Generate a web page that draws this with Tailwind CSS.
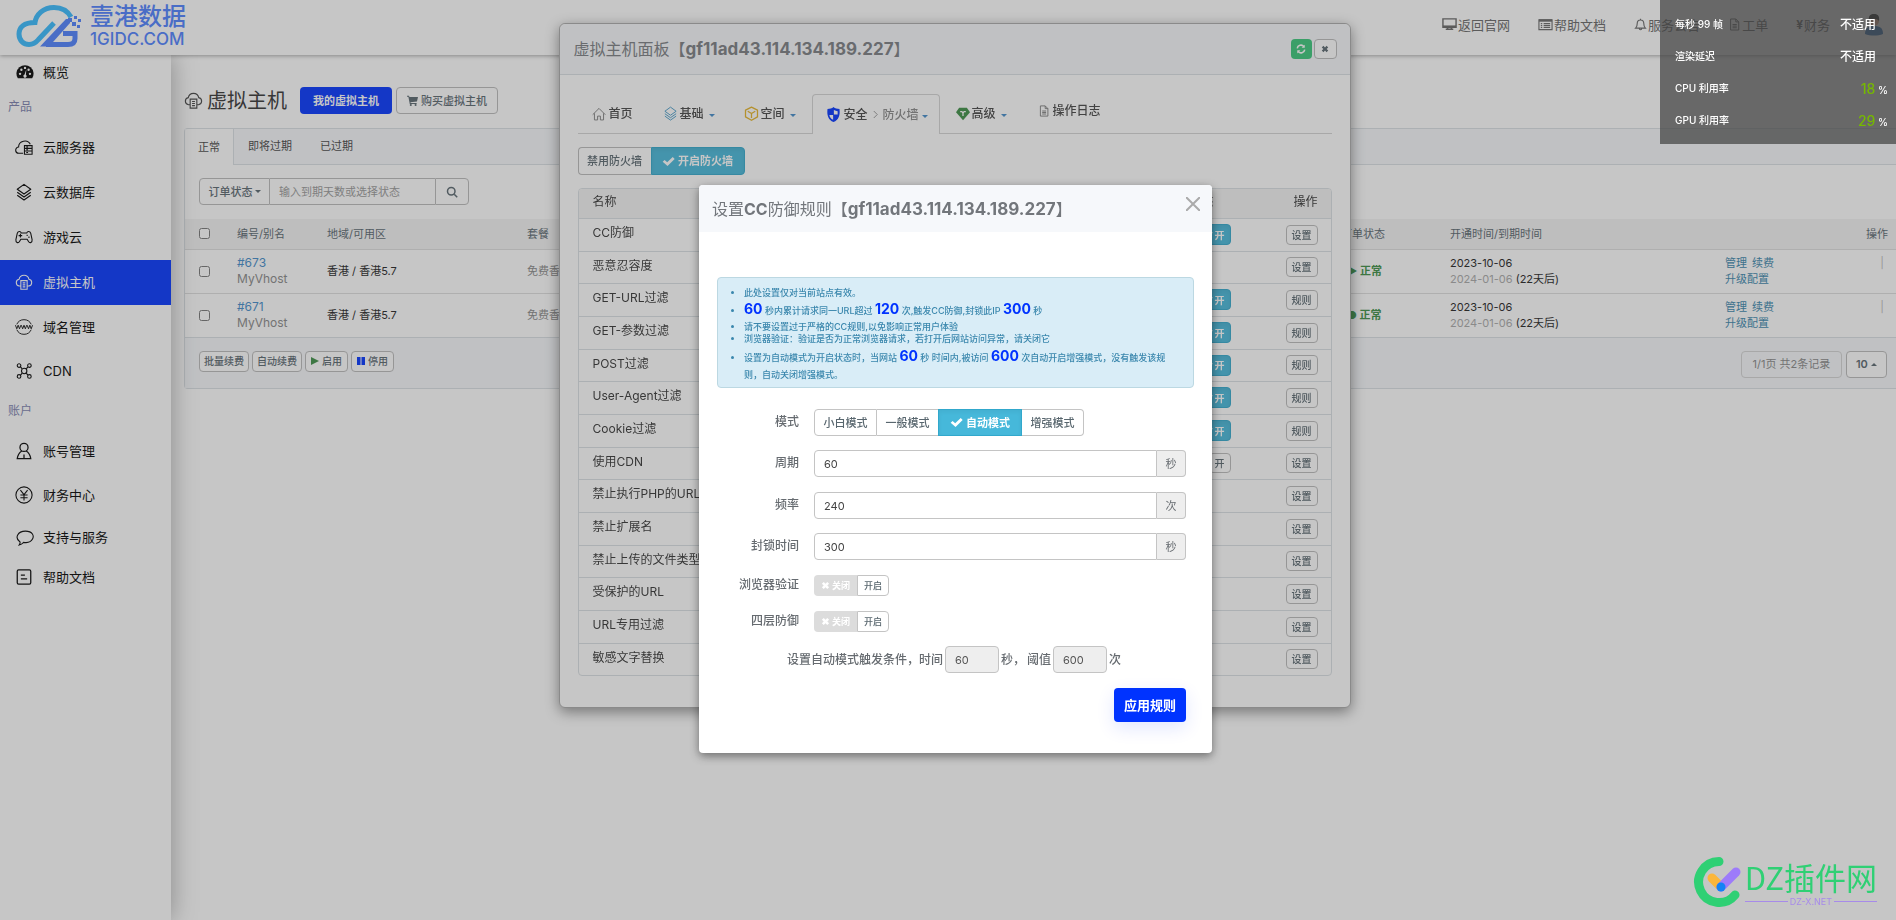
<!DOCTYPE html>
<html lang="zh-CN">
<head>
<meta charset="utf-8">
<title>壹港数据 - 虚拟主机</title>
<script src="https://cdn.jsdelivr.net/npm/@tailwindcss/browser@4"></script>
</head>
<body class="flex h-screen flex-col overflow-hidden bg-white font-['Inter','Noto_Sans_CJK_SC',sans-serif] text-[11px] leading-4 text-[#58666e]">

<svg class="hidden" aria-hidden="true">
  <symbol id="i-vhost" viewBox="0 0 20 20"><path d="M6 14.500H4.800A3.800 3.800 0 0 1 4.500 7 5.600 5.600 0 0 1 15.500 7a3.800 3.800 0 0 1-.3 7.500H14M6.500 8.500h7v9.500h-7zM8.500 11h3M8.500 13.200h3M8.500 15.400h3" fill="none" stroke="currentColor" stroke-width="1.200"/></symbol>
  <symbol id="i-layers" viewBox="0 0 20 20"><path d="M10 1.500 17.500 7 10 12.300 2.500 7zM2.500 10.300 10 15.600l7.500-5.300M2.500 13.500 10 18.800l7.500-5.300" fill="none" stroke="currentColor" stroke-width="1.300" stroke-linejoin="round"/></symbol>
  <symbol id="i-doc" viewBox="0 0 20 20"><path d="M4 1.500h8l4.500 4.500v12.500H4zM12 1.500V6h4.500M7 10h6.500M7 12.500h6.500M7 15h6.500" fill="none" stroke="currentColor" stroke-width="1.500"/></symbol>
  <symbol id="i-check" viewBox="0 0 20 20"><path d="M1 10.500 4 7.500l4 3.500L16.500 3l3 3L8.500 17z" fill="currentColor"/></symbol>
  <symbol id="i-x" viewBox="0 0 20 20"><path d="M2 6 6 2l4 4 4-4 4 4-4 4 4 4-4 4-4-4-4 4-4-4 4-4z" fill="currentColor"/></symbol>
</svg>

<!-- top bar -->
<header class="relative z-20 flex h-[55px] shrink-0 items-center justify-between bg-white pr-[13px] pl-4 shadow-[0_1px_4px_rgba(0,0,0,0.35)]">
  <a href="#" class="flex items-center gap-2 pb-1" aria-label="壹港数据">
    <svg class="h-[44px] w-[66px]" viewBox="0 0 66 44" fill="none">
      <path d="M55 13C51 6 45 3.500 38 3.500 27 3.500 20 11 19 18.500 8 18.500 3 23 3 30c0 7 5 10.500 10 10.500 5 0 7-2 9.500-5L38 19" stroke="#36baff" stroke-width="5"/>
      <path d="M50 15 24 42.500h9L54 19V15z" fill="#4d80ff"/>
      <path d="M30 40.500h22c5 0 7-2.500 7-6V29.500H47" stroke="#4d80ff" stroke-width="5"/>
      <path d="M52 14h4v4h-4zM56 18h4v4h-4zM58 12h3v3h-3zM62 15h3v3h-3zM61 21h3v3h-3z" fill="#4d80ff"/>
    </svg>
    <span class="flex flex-col text-[#4d80ff]">
      <span class="text-[24px] leading-[26px] font-medium">壹港数据</span>
      <span class="text-[17px] leading-[18px] font-medium">1GIDC.COM</span>
    </span>
  </a>
  <nav class="flex items-center gap-[28px] pb-[6px] text-[13px] text-[#666]">
    <a href="#" class="flex items-center gap-px"><svg class="size-[15px]" viewBox="0 0 16 16"><path d="M1 2h14v9H1zM6 11h4v2H6zM4 13h8" fill="none" stroke="currentColor" stroke-width="1.500"/><path d="M1 9h14v2H1z" fill="currentColor"/></svg>返回官网</a>
    <a href="#" class="flex items-center gap-px"><svg class="size-[15px]" viewBox="0 0 16 16"><path d="M1 3h14v10.500H1zM3 7h1.500M3 9h1.500M3 11h1.500M6 7h7M6 9h7M6 11h7" fill="none" stroke="currentColor" stroke-width="1.200"/><path d="M1 2.500h14V5H1z" fill="currentColor"/></svg>帮助文档</a>
    <a href="#" class="flex items-center gap-px"><svg class="size-[13px]" viewBox="0 0 16 16"><path d="M2 12.500c2-2 2-3.500 2-6a4 4 0 0 1 8 0c0 2.500 0 4 2 6zM6.500 13a1.500 1.500 0 0 0 3 0M8 1v1.500" fill="none" stroke="currentColor" stroke-width="1.400"/></svg>服务公告</a>
    <a href="#" class="flex items-center gap-px"><svg class="size-[13px]"><use href="#i-doc"/></svg>工单</a>
    <a href="#" class="flex items-center gap-px"><b class="text-[12px]">¥</b>财务</a>
    <a href="#" aria-label="账户" class="ml-[7px]"><svg class="h-[22px] w-[18px]" viewBox="0 0 18 22"><circle cx="9" cy="7" r="5" fill="#e0a080"/><path d="M4 7C3 1 6 0 9 0s6 1 5 7c-2-3-8-3-10 0z" fill="#222"/><path d="M0 20c0-6 3-8 9-8s9 2 9 8c-5 2-13 2-18 0z" fill="#2f6fb5"/></svg></a>
  </nav>
</header>

<div class="flex min-h-0 grow">
  <!-- side menu -->
  <aside class="relative z-10 w-[171px] shrink-0 bg-white text-[13px] text-black shadow-[0_0_24px_rgba(0,0,0,0.35)]">
    <a href="#" class="flex h-[34px] items-center gap-[9px] pl-4"><svg class="size-[18px]" viewBox="0 0 20 20"><path d="M2 17a9.500 9.500 0 1 1 16 0z" fill="currentColor"/><g fill="#fff"><circle cx="4.500" cy="12" r="1.300"/><circle cx="6" cy="7.500" r="1.300"/><circle cx="10" cy="5.500" r="1.300"/><circle cx="14" cy="7.500" r="1.300"/><circle cx="15.500" cy="12" r="1.300"/><path d="m11.500 7-.5 6a1.800 1.800 0 1 1-1.500-.2z"/></g></svg>概览</a>
    <h2 class="flex h-9 items-center pl-2 text-[12px] text-[#7b7fae]">产品</h2>
    <a href="#" class="flex h-[45px] items-center gap-[10px] pb-px pl-[15px]"><svg class="size-[18px]" viewBox="0 0 20 20" fill="none" stroke="currentColor" stroke-width="1.200"><path d="M9 17H4.500A3.500 3.500 0 0 1 4 10c0-7 10-9 13-3M10.500 8.500H19V18h-8.500zM10.500 11.500H19M10.500 14.500H19M12.500 10h2M12.500 13h2M12.500 16.200h2"/></svg>云服务器</a>
    <a href="#" class="flex h-[45px] items-center gap-[10px] pb-px pl-[15px]"><svg class="size-[18px]"><use href="#i-layers"/></svg>云数据库</a>
    <a href="#" class="flex h-[45px] items-center gap-[10px] pb-px pl-[15px]"><svg class="size-[18px]" viewBox="0 0 20 20" fill="none" stroke="currentColor" stroke-width="1.200"><path d="M7 5.500C6 3 3 3.500 2.500 6L1 13c-.3 3 2.500 4.500 4 2l1.500-2.500h7L15 15c1.500 2.500 4.300 1 4-2l-1.500-7C17 3.500 14 3 13 5.500zM4 8.500h4M6 6.500v4M13.500 7.500v1.500M15.500 9.500V11"/></svg>游戏云</a>
    <a href="#" class="flex h-[45px] items-center gap-[10px] bg-[#0033ff] pb-[2px] pl-[15px] text-white"><svg class="size-[18px]"><use href="#i-vhost"/></svg>虚拟主机</a>
    <a href="#" class="flex h-11 items-center gap-[10px] pl-[15px]"><svg class="size-[18px]" viewBox="0 0 20 20" fill="none" stroke="currentColor" stroke-width="1"><path d="M2 7a8.800 8.800 0 0 1 16 0M2 13a8.800 8.800 0 0 0 16 0M.5 8l1.500 4 1.500-4L5 12l1.500-4M7 8l1.500 4L10 8l1.500 4L13 8M13.500 8l1.500 4 1.500-4 1.500 4 1.500-4"/></svg>域名管理</a>
    <a href="#" class="flex h-11 items-center gap-[10px] pl-[15px]"><svg class="size-[18px]" viewBox="0 0 20 20" fill="none" stroke="currentColor" stroke-width="1.200"><circle cx="4.500" cy="4" r="2"/><circle cx="16" cy="4" r="2"/><circle cx="4.500" cy="16" r="2"/><circle cx="16" cy="16" r="2"/><circle cx="10.200" cy="10" r="3"/><path d="m6 5.500 2 2M14.500 5.500l-2 2M6 14.500l2-2M14.500 14.500l-2-2"/></svg>CDN</a>
    <h2 class="flex h-9 items-center pl-2 text-[12px] text-[#7b7fae]">账户</h2>
    <a href="#" class="flex h-11 items-center gap-[10px] pl-[15px]"><svg class="size-[18px]" viewBox="0 0 20 20" fill="none" stroke="currentColor" stroke-width="1.400"><circle cx="10" cy="6" r="4.500"/><path d="M7.500 10C4.500 12 3 14.500 2.500 18.500h15C17 14.500 15.500 12 12.500 10M10 14v4"/></svg>账号管理</a>
    <a href="#" class="flex h-11 items-center gap-[10px] pl-[15px]"><svg class="size-[18px]" viewBox="0 0 20 20" fill="none" stroke="currentColor" stroke-width="1.200"><circle cx="10" cy="10" r="9"/><path d="m6 4.500 4 5 4-5M10 9.500V16M6 10h8M6 13h8"/></svg>财务中心</a>
    <a href="#" class="flex h-10 items-center gap-[9px] pl-4"><svg class="size-[18px]" viewBox="0 0 20 20" fill="none" stroke="currentColor" stroke-width="1.200"><path d="M3.500 19c1-1.500 1.300-2 1-3.500C-2 11 2 3.500 10.500 3.500S20 9 18.500 12c-2 4-7 4.500-10 4-1.500 1.500-3 2.500-5 3z"/></svg>支持与服务</a>
    <a href="#" class="flex h-10 items-center gap-[10px] pl-[15px]"><svg class="size-[18px]" viewBox="0 0 20 20" fill="none" stroke="currentColor" stroke-width="1.400"><rect x="2.500" y="2" width="15" height="16" rx="1.500"/><path d="M6.500 8H11M6.500 12h7"/></svg>帮助文档</a>
  </aside>

  <!-- virtual host list -->
  <main class="flex min-w-0 grow flex-col pt-8 pl-[13px]">
    <div class="flex h-[27px] items-center">
      <svg class="mr-1 size-[19px] text-[#444]"><use href="#i-vhost"/></svg>
      <h1 class="mr-[13px] text-[20px] leading-6 text-[#333]">虚拟主机</h1>
      <button class="mr-1 h-[27px] rounded-sm bg-[#0033ff] px-[13px] text-[11px] font-bold text-white">我的虚拟主机</button>
      <button class="flex h-[27px] items-center gap-[3px] rounded-sm border border-[#bbb] px-[10px] font-medium"><svg class="size-[11px]" viewBox="0 0 16 16" fill="currentColor"><path d="M0 1h3l.5 2H16l-1.500 6.500-9.500 1 .3 1.200H14V13H4L2 2.500H0z"/><circle cx="5.500" cy="14.500" r="1.500"/><circle cx="12.500" cy="14.500" r="1.500"/></svg>购买虚拟主机</button>
    </div>

    <section class="mt-[14px] rounded-l border-y border-l border-[#dae0e4]">
      <div class="flex h-9 border-b border-[#dae0e4] bg-[#f6f8fb] text-[#444]">
        <button class="-mb-px rounded-tl border-r border-[#dae0e4] bg-white px-[13px] pb-px">正常</button>
        <button class="px-[14px] pb-px">即将过期</button>
        <button class="px-[14px] pb-px">已过期</button>
      </div>
      <div class="flex px-[14px] pt-[13px] pb-[14px]">
        <button class="flex h-[27px] w-[71px] items-center justify-center gap-[2px] rounded-l-sm border border-[#bbb] font-medium">订单状态<span class="border-x-3 border-t-3 border-x-transparent border-t-current"></span></button>
        <input type="text" aria-label="筛选" placeholder="输入到期天数或选择状态" class="h-[27px] w-[165px] border-y border-[#bbb] px-[9px] placeholder:text-[#999]">
        <button aria-label="搜索" class="flex h-[27px] w-[34px] items-center justify-center rounded-r-sm border border-[#bbb]"><svg class="size-3" viewBox="0 0 16 16" fill="none" stroke="currentColor" stroke-width="2"><circle cx="7" cy="7" r="5"/><path d="m11 11 4 4"/></svg></button>
      </div>
      <table class="w-full table-fixed text-left">
        <colgroup><col class="w-[38px]"><col class="w-[90px]"><col class="w-[200px]"><col><col class="w-[108px]"><col class="w-[275px]"><col class="w-[186px]"></colgroup>
        <thead>
          <tr class="h-[30px] border-b border-[#dedede] bg-[#f4f4f4]">
            <th class="pl-[14px]"><input type="checkbox" aria-label="全选" class="block size-[11px]"></th>
            <th class="pl-[14px] font-normal">编号/别名</th><th class="pl-[14px] font-normal">地域/可用区</th><th class="pl-[14px] font-normal">套餐</th>
            <th class="pl-[14px] font-normal">订单状态</th><th class="pl-[15px] font-normal">开通时间/到期时间</th><th class="pr-2 text-right font-normal">操作</th>
          </tr>
        </thead>
        <tbody>
          <tr class="h-11 border-b border-[#dedede]">
            <td class="pl-[14px]"><input type="checkbox" aria-label="选择 673" class="block size-[11px]"></td>
            <td class="pl-[14px] text-[12px]"><a href="#" class="text-[#428bca]">#673</a><br><span class="text-[#888]">MyVhost</span></td>
            <td class="pl-[14px] text-[#222]">香港 / 香港5.7</td><td class="pl-[14px] text-[#888]">免费香港虚拟主机</td>
            <td class="pl-[20px] font-bold text-[#3c8f44]">▶ 正常</td>
            <td class="pl-[15px] text-[#222]">2023-10-06<br><span class="text-[#aaa]">2024-01-06</span> (22天后)</td>
            <td class="pr-3 pl-[15px] align-middle"><div class="flex justify-between text-[#bbb]"><div><a href="#" class="mr-[5px] text-[#3a87ad]">管理</a><a href="#" class="text-[#3a87ad]">续费</a><br><a href="#" class="text-[#3a87ad]">升级配置</a></div>|</div></td>
          </tr>
          <tr class="h-11 border-b border-[#dae0e4]">
            <td class="pl-[14px]"><input type="checkbox" aria-label="选择 671" class="block size-[11px]"></td>
            <td class="pl-[14px] text-[12px]"><a href="#" class="text-[#428bca]">#671</a><br><span class="text-[#888]">MyVhost</span></td>
            <td class="pl-[14px] text-[#222]">香港 / 香港5.7</td><td class="pl-[14px] text-[#888]">免费香港虚拟主机</td>
            <td class="pl-[20px] font-bold text-[#3c8f44]">● 正常</td>
            <td class="pl-[15px] text-[#222]">2023-10-06<br><span class="text-[#aaa]">2024-01-06</span> (22天后)</td>
            <td class="pr-3 pl-[15px] align-middle"><div class="flex justify-between text-[#bbb]"><div><a href="#" class="mr-[5px] text-[#3a87ad]">管理</a><a href="#" class="text-[#3a87ad]">续费</a><br><a href="#" class="text-[#3a87ad]">升级配置</a></div>|</div></td>
          </tr>
        </tbody>
      </table>
      <div class="flex h-[50px] items-start justify-between bg-[#f6f8fb] pt-[13px] pr-[9px] pl-[14px]">
        <div class="flex gap-[3px] text-[10px] font-medium">
          <button class="h-[21px] rounded-sm border border-[#bbb] bg-white px-1">批量续费</button>
          <button class="h-[21px] rounded-sm border border-[#bbb] bg-white px-1">自动续费</button>
          <button class="flex h-[21px] items-center gap-[3px] rounded-sm border border-[#bbb] bg-white px-[5px]"><svg class="size-2" viewBox="0 0 8 8"><path d="M0 0 8 4 0 8z" fill="#3c8f44"/></svg>启用</button>
          <button class="flex h-[21px] items-center gap-[3px] rounded-sm border border-[#bbb] bg-white px-[5px]"><svg class="size-2" viewBox="0 0 8 8"><path d="M0 0h3.500v8H0zM4.500 0H8v8H4.500z" fill="#0033ff"/></svg>停用</button>
        </div>
        <div class="flex gap-1">
          <span class="flex h-[27px] w-[101px] items-center justify-center rounded-sm border border-[#d4d4d4] text-[#888]">1/1页 共2条记录</span>
          <button class="flex h-[27px] w-[41px] items-center justify-center gap-[3px] rounded-sm border border-[#bbb] bg-white font-semibold">10<span class="border-x-3 border-b-3 border-x-transparent border-b-current"></span></button>
        </div>
      </div>
    </section>
  </main>
</div>

<!-- host panel window -->
<div class="fixed inset-0 z-30 flex items-start justify-center pt-[23px] pl-[13px]">
  <section class="w-[792px] rounded-md border border-[#aaa] bg-white shadow-[0_4px_14px_rgba(0,0,0,0.45)]">
    <header class="flex h-[51px] items-center justify-between rounded-t-md border-b border-[#dae0e4] bg-[#f6f8fb] pr-[13px] pl-[14px]">
      <h2 class="text-[16px] leading-5 text-[#7a7d82]">虚拟主机面板【<b class="text-[17px]">gf11ad43.114.134.189.227</b>】</h2>
      <div class="flex gap-[2px]">
        <button aria-label="刷新" class="flex h-5 w-[21px] items-center justify-center rounded-sm bg-[#39c779] text-white"><svg class="size-[10px]" viewBox="0 0 16 16" fill="none" stroke="currentColor" stroke-width="2.500"><path d="M2 7a6 6 0 0 1 10.500-3M14 9a6 6 0 0 1-10.500 3"/><path d="M14 1v5H9zM2 15v-5h5z" fill="currentColor" stroke="none"/></svg></button>
        <button aria-label="关闭" class="flex h-5 w-[23px] items-center justify-center rounded-sm border border-[#bbb] bg-white text-[#58666e]"><svg class="size-2"><use href="#i-x"/></svg></button>
      </div>
    </header>
    <div class="px-[18px] pt-[19px] pb-[31px]">
      <nav class="flex h-10 border-b border-[#d4d4d4] text-[12px] font-medium text-[#444]">
        <a href="#" class="flex w-[72px] items-center gap-[3px] pl-[14px]"><svg class="size-[14px] text-[#777]" viewBox="0 0 20 20" fill="none" stroke="currentColor" stroke-width="1.300"><path d="M1 11 10 2l9 9M3.500 9v9.500H8V13h4v5.500h4.500V9"/></svg>首页</a>
        <a href="#" class="flex w-[81px] items-center gap-[2px] pl-[13px]"><svg class="size-[15px] text-[#4a9cc8]"><use href="#i-layers"/></svg>基础<span class="mt-1 ml-[3px] border-x-3 border-t-3 border-x-transparent border-t-[#428bca]"></span></a>
        <a href="#" class="flex w-[81px] items-center gap-[2px] pl-[13px]"><svg class="size-[15px] text-[#e5b325]" viewBox="0 0 20 20" fill="none" stroke="currentColor" stroke-width="1.700" stroke-linejoin="round"><path d="m10 1.500 8 4v9l-8 4.500-8-4.500v-9zM5 7l5 3 5-3M10 10v6"/></svg>空间<span class="mt-1 ml-[3px] border-x-3 border-t-3 border-x-transparent border-t-[#428bca]"></span></a>
        <a href="#" class="-mb-px flex w-[128px] items-center gap-[3px] rounded-t-sm border border-b-0 border-[#d4d4d4] bg-white pl-[13px]"><svg class="size-[15px]" viewBox="0 0 20 20"><path d="M10 0c2 2 5 2.500 8 2.500C19 11 17 17 10 20 3 17 1 11 2 2.500 5 2.500 8 2 10 0z" fill="#0033ff"/><path d="M10.500 4c1.500 1 3.500 1.500 5 1.500V10h-5zM4.500 10.500h5V17c-3-1.500-4.700-4-5-6.500z" fill="#fff"/></svg>安全<svg class="mx-px size-[7px] text-[#888]" viewBox="0 0 8 8" fill="none" stroke="currentColor"><path d="m2 0 4 4-4 4"/></svg><span class="text-[#888]">防火墙</span><span class="mt-1 border-x-3 border-t-3 border-x-transparent border-t-[#428bca]"></span></a>
        <a href="#" class="flex w-[84px] items-center gap-[2px] pl-[16px]"><svg class="size-[14px]" viewBox="0 0 20 20"><path d="M4.500 1h11L20 7.500 10 19 0 7.500z" fill="#3c8f44"/><path d="M6 6.500h2.500L10 9l1.500-2.500H14M10 9v4" fill="none" stroke="#fff" stroke-width="1.800"/></svg>高级<span class="mt-1 ml-[3px] border-x-3 border-t-3 border-x-transparent border-t-[#428bca]"></span></a>
        <a href="#" class="flex items-center gap-[3px] pb-[6px] pl-[14px]"><svg class="size-3 text-[#777]"><use href="#i-doc"/></svg>操作日志</a>
      </nav>
      <div class="mt-[13px] flex text-[11px]">
        <button class="h-7 w-[73px] rounded-l-sm border border-r-0 border-[#bbb] font-medium">禁用防火墙</button>
        <button class="flex h-7 w-[94px] items-center justify-center gap-[3px] rounded-r-sm border border-[#31a8cc] bg-[#46b8da] font-bold text-white inset-shadow-sm"><svg class="size-[13px]"><use href="#i-check"/></svg>开启防火墙</button>
      </div>
      <div class="mt-[13px] overflow-hidden rounded border border-[#dae0e4]">
        <table class="w-full table-fixed text-left text-[12px] text-[#333]">
          <colgroup><col class="w-[440px]"><col><col class="w-[100px]"></colgroup>
          <thead><tr class="h-[29px] bg-[#f4f4f4]"><th class="pb-[3px] pl-[14px] font-normal">名称</th><th class="pr-[17px] pb-[3px] text-right font-normal">状态</th><th class="pr-[13px] pb-[3px] text-right font-normal">操作</th></tr></thead>
          <tbody id="rules" class="[&>tr]:h-[33px] [&>tr:nth-child(3n+2)]:h-8"></tbody>
        </table>
      </div>
    </div>
  </section>
</div>

<!-- backdrop and rule dialog -->
<div class="fixed inset-0 z-40 flex items-start justify-center bg-[#424242]/30 pt-[185px] pl-[15px]">
  <section role="dialog" aria-labelledby="dlg" class="w-[513px] rounded bg-white pb-[31px] text-[#666b70] shadow-[0_3px_10px_rgba(0,0,0,0.45)]">
    <header class="flex h-[47px] items-center justify-between rounded-t bg-[#f6f8fb] pr-3 pl-[13px]">
      <h2 id="dlg" class="text-[16px] leading-5 text-[#72767b]">设置<b>CC</b>防御规则【<b class="text-[17px]">gf11ad43.114.134.189.227</b>】</h2>
      <button aria-label="关闭" class="pb-[10px] text-[#aaa]"><svg class="size-[14px]" viewBox="0 0 14 14" fill="none" stroke="currentColor" stroke-width="2"><path d="m0 0 14 14M14 0 0 14"/></svg></button>
    </header>
    <div class="mt-[45px] px-[18px]">
      <ul class="h-[111px] list-disc rounded border border-[#bcd8e2] bg-[#d9edf7] pt-[9px] pr-10 pl-[26px] text-[9px] leading-3 font-medium text-[#3a87ad]">
        <li>此处设置仅对当前站点有效。</li>
        <li class="leading-5"><b class="text-[14px] text-[#0033ff]">60</b> 秒内累计请求同一URL超过 <b class="text-[14px] text-[#0033ff]">120</b> 次,触发CC防御,封锁此IP <b class="text-[14px] text-[#0033ff]">300</b> 秒</li>
        <li>请不要设置过于严格的CC规则,以免影响正常用户体验</li>
        <li>浏览器验证：验证是否为正常浏览器请求，若打开后网站访问异常，请关闭它</li>
        <li class="whitespace-nowrap"><span class="leading-[22px]">设置为自动模式为开启状态时，当网站 <b class="text-[14px] text-[#0033ff]">60</b> 秒 时间内,被访问 <b class="text-[14px] text-[#0033ff]">600</b> 次自动开启增强模式，没有触发该规</span><br>则，自动关闭增强模式。</li>
      </ul>
      <form class="mt-[21px] flex flex-col pr-2 text-[12px] font-medium">
        <fieldset class="flex items-center">
          <legend class="float-left w-[82px] pb-px text-right">模式</legend>
          <div class="ml-[15px] flex h-[27px] text-[11px] text-[#58666e]">
            <button type="button" class="w-[63px] rounded-l-sm border border-[#c4c4c4]">小白模式</button>
            <button type="button" class="w-[61px] border-y border-[#c4c4c4]">一般模式</button>
            <button type="button" class="flex w-[84px] items-center justify-center gap-[3px] border border-[#31a8cc] bg-[#46b8da] font-bold text-white inset-shadow-sm"><svg class="size-[13px]"><use href="#i-check"/></svg>自动模式</button>
            <button type="button" class="w-[62px] rounded-r-sm border border-l-0 border-[#c4c4c4]">增强模式</button>
          </div>
        </fieldset>
        <div class="mt-[14px] flex h-[27px] items-center">
          <label for="period" class="mr-[15px] w-[82px] pb-px text-right">周期</label>
          <input id="period" value="60" class="h-full min-w-0 grow rounded-l-sm border border-[#c4c4c4] px-[9px] text-[11px] font-normal text-[#444]">
          <span class="flex h-full w-[29px] items-center justify-center rounded-r-sm border border-l-0 border-[#c4c4c4] bg-[#eee] text-[11px] font-normal">秒</span>
        </div>
        <div class="mt-[15px] flex h-[27px] items-center">
          <label for="rate" class="mr-[15px] w-[82px] pb-px text-right">频率</label>
          <input id="rate" value="240" class="h-full min-w-0 grow rounded-l-sm border border-[#c4c4c4] px-[9px] text-[11px] font-normal text-[#444]">
          <span class="flex h-full w-[29px] items-center justify-center rounded-r-sm border border-l-0 border-[#c4c4c4] bg-[#eee] text-[11px] font-normal">次</span>
        </div>
        <div class="mt-[14px] flex h-[27px] items-center">
          <label for="lock" class="mr-[15px] w-[82px] pb-px text-right">封锁时间</label>
          <input id="lock" value="300" class="h-full min-w-0 grow rounded-l-sm border border-[#c4c4c4] px-[9px] text-[11px] font-normal text-[#444]">
          <span class="flex h-full w-[29px] items-center justify-center rounded-r-sm border border-l-0 border-[#c4c4c4] bg-[#eee] text-[11px] font-normal">秒</span>
        </div>
        <div class="mt-[15px] flex h-[21px] items-center">
          <span class="mr-[15px] w-[82px] pb-px text-right">浏览器验证</span>
          <button type="button" class="flex h-full w-[43px] items-center justify-center gap-[2px] rounded-l-sm bg-[#dcdcdc] text-[9px] font-bold text-white"><svg class="size-[9px]"><use href="#i-x"/></svg>关闭</button>
          <button type="button" class="h-full w-8 rounded-r-sm border border-[#c4c4c4] text-[9px] text-[#58666e]">开启</button>
        </div>
        <div class="mt-[15px] flex h-[21px] items-center">
          <span class="mr-[15px] w-[82px] pb-px text-right">四层防御</span>
          <button type="button" class="flex h-full w-[43px] items-center justify-center gap-[2px] rounded-l-sm bg-[#dcdcdc] text-[9px] font-bold text-white"><svg class="size-[9px]"><use href="#i-x"/></svg>关闭</button>
          <button type="button" class="h-full w-8 rounded-r-sm border border-[#c4c4c4] text-[9px] text-[#58666e]">开启</button>
        </div>
        <div class="mt-[14px] flex h-[27px] items-center gap-[2px] pl-[70px]">
          <label for="t">设置自动模式触发条件，时间</label>
          <input id="t" value="60" disabled class="h-full w-[54px] rounded-sm border border-[#c4c4c4] bg-[#eee] px-[9px] text-[11px] font-normal text-[#555]">
          <span>秒，</span><label for="n">阈值</label>
          <input id="n" value="600" disabled class="h-full w-[54px] rounded-sm border border-[#c4c4c4] bg-[#eee] px-[9px] text-[11px] font-normal text-[#555]">
          <span>次</span>
        </div>
        <button type="button" class="mt-[15px] h-[34px] self-end rounded-sm bg-[#0033ff] px-[10px] text-[13px] font-bold text-white shadow-[0_6px_18px_rgba(0,51,255,0.12)]">应用规则</button>
      </form>
    </div>
  </section>
</div>

<!-- performance overlay -->
<dl class="fixed top-0 right-0 z-50 flex h-36 w-[236px] flex-col bg-[#404040]/70 pt-2 pr-2 pl-[15px] text-[10px] font-medium text-white">
  <div class="flex h-8 items-center justify-between"><dt>每秒 99 帧</dt><dd class="mr-3 pt-[2px] text-[12px]">不适用</dd></div>
  <div class="flex h-8 items-center justify-between"><dt>渲染延迟</dt><dd class="mr-3 pt-[2px] text-[12px]">不适用</dd></div>
  <div class="flex h-8 items-center justify-between"><dt>CPU 利用率</dt><dd class="pt-[2px]"><span class="text-[14px] text-[#76b900]">18</span> %</dd></div>
  <div class="flex h-8 items-center justify-between"><dt>GPU 利用率</dt><dd class="pt-[2px]"><span class="text-[14px] text-[#76b900]">29</span> %</dd></div>
</dl>

<!-- site watermark -->
<div class="fixed right-[19px] bottom-3 z-50 flex items-center gap-1 text-[#2fd074]">
  <svg class="h-[51px] w-12" viewBox="0 0 48 51" fill="none" stroke-linecap="round"><path d="M26 4.500A20.500 20.500 0 1 0 42 38" stroke="#2fd074" stroke-width="9"/><path d="m19 21 8 8" stroke="#fbb63a" stroke-width="9"/><path d="m28 30 15-15" stroke="#9d7bfa" stroke-width="9"/><circle cx="28" cy="30" r="4.500" fill="#1283f5"/></svg>
  <div class="flex flex-col">
    <span class="font-['Noto_Sans_CJK_SC',sans-serif] text-[31px] leading-[38px]">DZ插件网</span>
    <span class="flex items-center gap-[2px] text-[9px] leading-3 text-[#a78bea]"><i class="h-px grow bg-current"></i>DZ-X.NET<i class="h-px grow bg-current"></i></span>
  </div>
</div>

<script>
  const rules = [
    ["CC防御", "设置", "on"], ["恶意忍容度", "设置", ""], ["GET-URL过滤", "规则", "on"], ["GET-参数过滤", "规则", "on"],
    ["POST过滤", "规则", "on"], ["User-Agent过滤", "规则", "on"], ["Cookie过滤", "规则", "on"], ["使用CDN", "设置", "off"],
    ["禁止执行PHP的URL", "设置", ""], ["禁止扩展名", "设置", ""], ["禁止上传的文件类型", "设置", ""], ["受保护的URL", "设置", ""],
    ["URL专用过滤", "设置", ""], ["敏感文字替换", "设置", ""]
  ];
  const toggles = {
    on: '<button class="inline-flex h-[21px] items-center gap-[2px] rounded-sm border border-[#31a8cc] bg-[#46b8da] px-[5px] align-middle text-[10px] font-bold text-white inset-shadow-sm"><svg class="size-[9px]"><use href="#i-check"/></svg>开</button>',
    off: '<button class="h-5 rounded-sm border border-[#bbb] px-[5px] align-middle text-[10px] font-medium text-[#58666e]">开</button>',
    "": ""
  };
  document.getElementById("rules").innerHTML = rules.map(([name, action, state]) =>
    '<tr class="border-t border-[#dae0e4]"><td class="pb-[3px] pl-[14px]">' + name + '</td><td class="text-right">' + toggles[state] +
    '</td><td class="pr-[13px] text-right"><button class="h-5 rounded-sm border border-[#bbb] px-[5px] align-middle text-[10px] font-medium text-[#58666e]">' + action + '</button></td></tr>').join("");
</script>
</body>
</html>
